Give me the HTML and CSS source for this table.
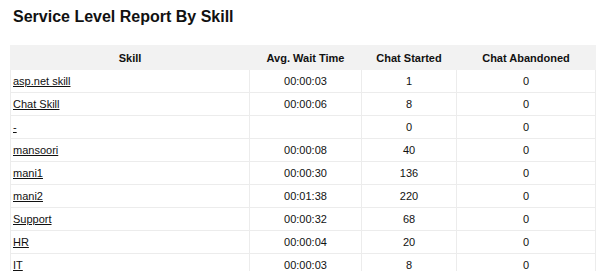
FILE: index.html
```html
<!DOCTYPE html>
<html>
<head>
<meta charset="utf-8">
<link rel="stylesheet" href="styles.css">
</head>
<body>
<div class="page">
  <h2 class="title">Service Level Report By Skill</h2>
  <table class="report">
    <colgroup>
      <col class="c1"><col class="c2"><col class="c3"><col class="c4">
    </colgroup>
    <thead>
      <tr><th>Skill</th><th>Avg. Wait Time</th><th>Chat Started</th><th>Chat Abandoned</th></tr>
    </thead>
    <tbody>
      <tr><td class="name"><a href="#">asp.net skill</a></td><td>00:00:03</td><td>1</td><td>0</td></tr>
      <tr><td class="name"><a href="#">Chat Skill</a></td><td>00:00:06</td><td>8</td><td>0</td></tr>
      <tr><td class="name"><a href="#">-</a></td><td></td><td>0</td><td>0</td></tr>
      <tr><td class="name"><a href="#">mansoori</a></td><td>00:00:08</td><td>40</td><td>0</td></tr>
      <tr><td class="name"><a href="#">mani1</a></td><td>00:00:30</td><td>136</td><td>0</td></tr>
      <tr><td class="name"><a href="#">mani2</a></td><td>00:01:38</td><td>220</td><td>0</td></tr>
      <tr><td class="name"><a href="#">Support</a></td><td>00:00:32</td><td>68</td><td>0</td></tr>
      <tr><td class="name"><a href="#">HR</a></td><td>00:00:04</td><td>20</td><td>0</td></tr>
      <tr><td class="name"><a href="#">IT</a></td><td>00:00:03</td><td>8</td><td>0</td></tr>
    </tbody>
  </table>
</div>
</body>
</html>
```
FILE: styles.css
```css
html, body {
  margin: 0;
  padding: 0;
  background: #fff;
}
.page {
  padding: 7px 5px 0 10px;
  font-family: "Liberation Sans", Arial, sans-serif;
  color: #000;
}
.title {
  margin: 0 0 18px 3px;
  font-size: 16px;
  line-height: 20px;
  font-weight: bold;
  color: #111;
}
.report {
  width: 585px;
  border-collapse: collapse;
  font-size: 11px;
  table-layout: fixed;
}
.c1 { width: 239px; }
.c2 { width: 112px; }
.c3 { width: 95px; }
.c4 { width: 139px; }
.report th {
  background: #f2f2f2;
  border: 1px solid #f2f2f2;
  font-weight: bold;
  padding: 6px 3px 5px;
  line-height: 12px;
  text-align: center;
  color: #111;
}
.report td {
  border: 1px solid #ececec;
  padding: 5px 3px;
  line-height: 12px;
  text-align: center;
  color: #111;
}
.report td.name {
  text-align: left;
  padding-left: 2px;
}
.report a {
  color: #111;
  text-decoration: underline;
}
```
